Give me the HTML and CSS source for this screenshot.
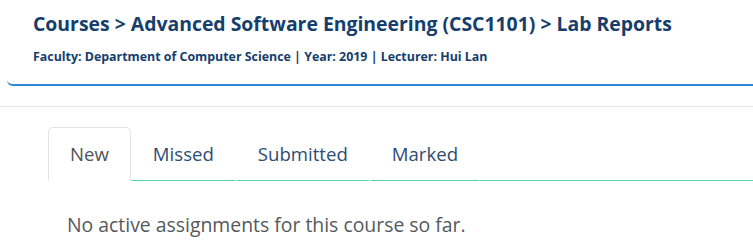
FILE: index.html
```html
<!DOCTYPE html>
<html lang="en">

<head>
    <meta charset="UTF-8">
    <meta name="viewport" content="width=device-width, initial-scale=1.0">
    <title>Lab Reports</title>
    <link rel="stylesheet" href="styles.css">
</head>

<body>
    <div class="course-header">
        <h1>Courses &gt; Advanced Software Engineering (CSC1101) &gt; Lab Reports</h1>
        <p class="course-meta">Faculty: Department of Computer Science | Year: 2019 | Lecturer: Hui Lan</p>
    </div>
    <div class="divider"></div>

    <div class="content">
        <ul class="tabs">
            <li class="tab active">New</li>
            <li class="tab">Missed</li>
            <li class="tab">Submitted</li>
            <li class="tab">Marked</li>
            <li class="tab-fill"></li>
        </ul>
        <p class="empty">No active assignments for this course so far.</p>
    </div>
</body>

</html>
```
FILE: styles.css
```css
body {
    font-family: "Open Sans", "Noto Sans", sans-serif;
    background-color: #fff;
    margin: 0;
    padding: 0;
    overflow: hidden;
}

.course-header {
    margin-left: 7px;
    padding: 10px 26px 19px;
    border-bottom: 2px solid #2c88d9;
    border-bottom-left-radius: 6px;
}

.course-header h1 {
    margin: 0;
    font-size: 19.4px;
    font-weight: 700;
    color: #163e6c;
    line-height: 28px;
}

.course-meta {
    margin: 10px 0 0;
    font-size: 12.4px;
    font-weight: 700;
    color: #163e6c;
    line-height: 17px;
}

.divider {
    margin-top: 20px;
    border-top: 1px solid #e6e6e6;
}

.content {
    padding: 20px 0 0 48px;
}

.tabs {
    display: flex;
    list-style: none;
    margin: 0;
    padding: 0;
}

.tab {
    padding: 13px 21px 14px;
    font-size: 18.6px;
    line-height: 25px;
    color: #2d4d74;
    border: 1px solid transparent;
    border-bottom: 1px solid #56d39c;
    border-radius: 5px 5px 0 0;
}

.tab.active {
    color: #505458;
    border-color: #e3e3e3;
    border-bottom-color: #fff;
}

.tab-fill {
    flex: 1;
    border-bottom: 1px solid #56d39c;
}

.empty {
    margin: 31px 0 0 19px;
    font-size: 19.4px;
    line-height: 25px;
    color: #55595c;
}
```
